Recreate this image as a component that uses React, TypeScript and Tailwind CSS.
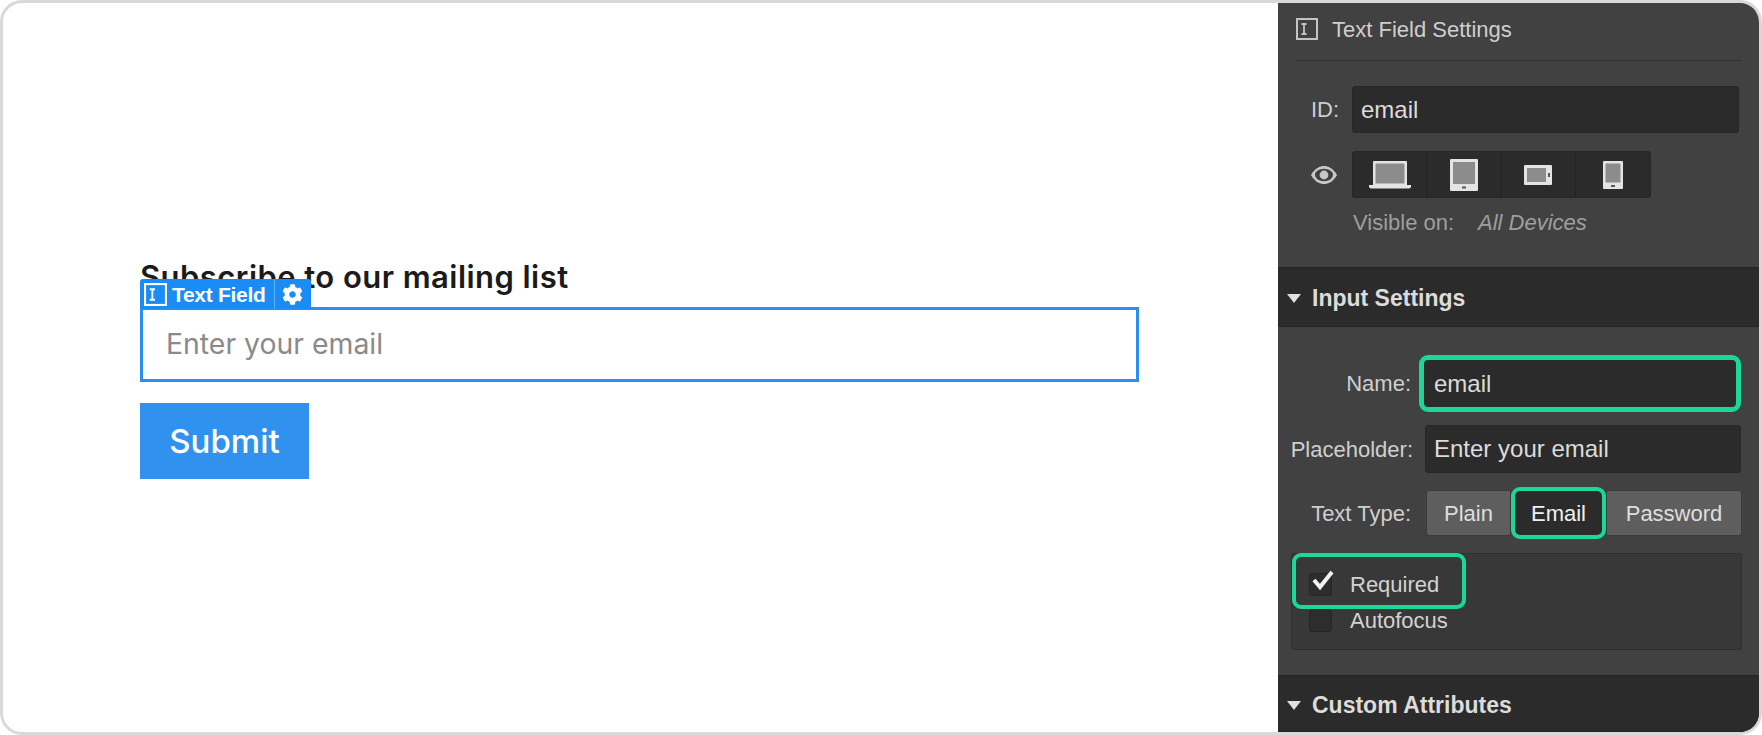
import { FaCog } from "react-icons/fa";

function TextFieldIcon({ className }: { className: string }) {
  return (
    <svg className={className} viewBox="0 0 22 22" fill="none" stroke="currentColor">
      <rect x="1" y="1" width="20" height="20" strokeWidth="2" />
      <path d="M5.5 6h5M5.5 16h5M8 6v10" strokeWidth="1.8" />
    </svg>
  );
}

function Laptop() {
  return (
    <svg width="44" height="30" viewBox="0 0 44 30">
      <rect x="5" y="1" width="34" height="25" rx="1" fill="#e4e4e4" />
      <rect x="7.5" y="3.5" width="29" height="20" fill="#8c8c8c" />
      <path d="M1 25h42v1.5c0 1-1 2-2 2H3c-1 0-2-1-2-2z" fill="#e4e4e4" />
    </svg>
  );
}

function Tablet() {
  return (
    <svg width="30" height="34" viewBox="0 0 30 34">
      <rect x="1" y="1" width="28" height="32" rx="1" fill="#e4e4e4" />
      <rect x="4" y="4" width="22" height="22" fill="#8c8c8c" />
      <rect x="13" y="28.5" width="4" height="2" fill="#555" />
    </svg>
  );
}

function TabletLandscape() {
  return (
    <svg width="30" height="22" viewBox="0 0 30 22">
      <rect x="1" y="1" width="28" height="20" rx="1" fill="#e4e4e4" />
      <rect x="4" y="4" width="19" height="14" fill="#8c8c8c" />
      <rect x="25" y="9" width="2" height="4" fill="#555" />
    </svg>
  );
}

function Phone() {
  return (
    <svg width="22" height="30" viewBox="0 0 22 30">
      <rect x="1" y="1" width="20" height="28" rx="1" fill="#e4e4e4" />
      <rect x="3.5" y="3.5" width="15" height="19" fill="#8c8c8c" />
      <rect x="9" y="25" width="4" height="2" fill="#555" />
    </svg>
  );
}

function Caret() {
  return (
    <svg width="14" height="9" viewBox="0 0 14 9" className="ml-[9px] mr-[11px]">
      <path d="M0 0h14L7 9z" fill="#e0e0e0" />
    </svg>
  );
}

function SectionHeader({ title, className }: { title: string; className: string }) {
  return (
    <div className={`flex items-center bg-[#2b2b2b] border-y border-[#242424] pt-[3px] text-[23px] font-bold text-[#dcdcdc] ${className}`}>
      <Caret />
      {title}
    </div>
  );
}

export default function App() {
  return (
    <div className="w-[1762px] h-[735px] flex overflow-hidden bg-white border-[3px] border-[#d9d9d9] rounded-[22px] font-['Liberation_Sans',sans-serif]">
      <div className="w-[1275px] pl-[137px] pt-[251px] font-['Inter',sans-serif]">
        <h2 className="h-[53px] leading-[45px] text-[31px] font-semibold tracking-[0.45px] text-[#1b1b1b]">
          Subscribe to our mailing list
        </h2>
        <div className="relative w-[999px] h-[75px] border-[3px] border-[#2a8ff0] flex items-center pl-[23px] text-[28.4px] text-[#8a8a8a]">
          Enter your email
          <div className="absolute left-[-3px] top-[-31px] w-[171px] h-[30px] flex items-center bg-[#1a8cf5] rounded-t-[3px] text-white font-['Liberation_Sans',sans-serif] text-[21px] font-bold leading-none">
            <TextFieldIcon className="w-[23px] h-[23px] ml-[4px] mr-[5px]" />
            <span className="tracking-[-0.3px]">Text Field</span>
            <span className="w-px h-full bg-[#5fb0f8] ml-[9px] mr-[7px]" />
            <FaCog className="w-[21px] h-[21px]" />
          </div>
        </div>
        <div className="mt-[21px] w-[169px] h-[76px] pt-[1px] flex items-center justify-center bg-[#3092ee] text-white text-[33px] font-medium">
          Submit
        </div>
      </div>

      <div className="w-[481px] h-full bg-[#414141] flex flex-col text-[#d6d6d6]">
        <div className="mx-[18px] h-[58px] pb-[5px] flex items-center border-b border-[#2e2e2e] text-[22px] text-[#cfcfcf]">
          <TextFieldIcon className="w-[22px] h-[22px] mr-[14px] text-[#c4c4c4]" />
          Text Field Settings
        </div>

        <div className="mt-[25px] flex items-center ml-[33px]">
          <span className="w-[41px] text-[22px] text-[#cfcfcf]">ID:</span>
          <div className="w-[387px] h-[47px] flex items-center pl-[8px] bg-[#2b2b2b] border border-[#262626] rounded-[3px] text-[24px] text-[#dcdcdc]">
            email
          </div>
        </div>

        <div className="mt-[18px] flex items-center ml-[32px]">
          <svg className="w-[28px] h-[22px] mr-[14px]" viewBox="0 0 28 22" fill="none">
            <path d="M1 11C5 4 10 2 14 2s9 2 13 9C23 18 18 20 14 20S5 18 1 11z" fill="#c8c8c8" />
            <ellipse cx="14" cy="11" rx="9" ry="6.2" fill="#414141" />
            <circle cx="14" cy="11" r="4.4" fill="#c8c8c8" />
          </svg>
          <div className="w-[299px] h-[47px] grid grid-cols-4 bg-[#2b2b2b] border border-[#262626] rounded-[3px] divide-x divide-[#222]">
            <div className="flex items-center justify-center"><Laptop /></div>
            <div className="flex items-center justify-center"><Tablet /></div>
            <div className="flex items-center justify-center"><TabletLandscape /></div>
            <div className="flex items-center justify-center"><Phone /></div>
          </div>
        </div>

        <div className="mt-[8px] ml-[75px] flex text-[22px] text-[#9e9e9e]">
          <span className="w-[125px]">Visible on:</span>
          <span className="italic">All Devices</span>
        </div>

        <SectionHeader title="Input Settings" className="mt-[28px] h-[60px]" />

        <div className="mt-[28px] flex items-center">
          <span className="w-[133px] text-right text-[22px] text-[#cfcfcf]">Name:</span>
          <div className="ml-[8px] w-[322px] h-[57px] flex items-center pl-[10px] bg-[#2b2b2b] border-[5px] border-[#1bd896] rounded-[9px] text-[24px] text-[#dcdcdc]">
            email
          </div>
        </div>

        <div className="mt-[13px] flex items-center">
          <span className="w-[135px] text-right text-[22px] text-[#cfcfcf]">Placeholder:</span>
          <div className="ml-[12px] w-[316px] h-[48px] flex items-center pl-[8px] bg-[#2b2b2b] border border-[#262626] rounded-[3px] text-[24px] text-[#dcdcdc]">
            Enter your email
          </div>
        </div>

        <div className="mt-[17px] flex items-center">
          <span className="w-[133px] text-right text-[22px] text-[#cfcfcf]">Text Type:</span>
          <div className="ml-[15px] w-[316px] h-[46px] flex items-center text-[22px] text-[#dedede]">
            <div className="w-[85px] h-full flex items-center justify-center bg-[#5e5e5e] border border-[#3a3a3a] rounded-l-[3px]">Plain</div>
            <div className="w-[95px] h-[52px] -my-[3px] flex items-center justify-center bg-[#2b2b2b] border-[4px] border-[#1bd896] rounded-[9px] text-[#f0f0f0]">Email</div>
            <div className="flex-1 h-full flex items-center justify-center bg-[#5e5e5e] border border-[#3a3a3a] rounded-r-[3px]">Password</div>
          </div>
        </div>

        <div className="mt-[17px] mx-[13px] w-[451px] h-[97px] relative bg-[#383838] border border-[#2f2f2f] rounded-[3px] text-[22px] text-[#d2d2d2]">
          <div className="ml-[17px] mt-[19px] flex items-center h-[23px]">
            <span className="relative w-[23px] h-[23px] bg-[#2d2d2d] border border-[#262626] rounded-[3px]">
              <svg className="absolute left-[1px] top-[-6px] w-[24px] h-[24px]" viewBox="0 0 24 24" fill="none">
                <path d="M3 12l6 7L21 4" stroke="#f4f4f4" strokeWidth="4" />
              </svg>
            </span>
            <span className="ml-[18px]">Required</span>
          </div>
          <div className="ml-[17px] mt-[13px] flex items-center h-[23px]">
            <span className="w-[23px] h-[23px] bg-[#2d2d2d] border border-[#262626] rounded-[3px]" />
            <span className="ml-[18px]">Autofocus</span>
          </div>
          <div className="absolute left-0 top-[-1px] w-[174px] h-[56px] border-[4.5px] border-[#1bd896] rounded-[9px]" />
        </div>

        <SectionHeader title="Custom Attributes" className="mt-[25px] flex-1" />
      </div>
    </div>
  );
}
